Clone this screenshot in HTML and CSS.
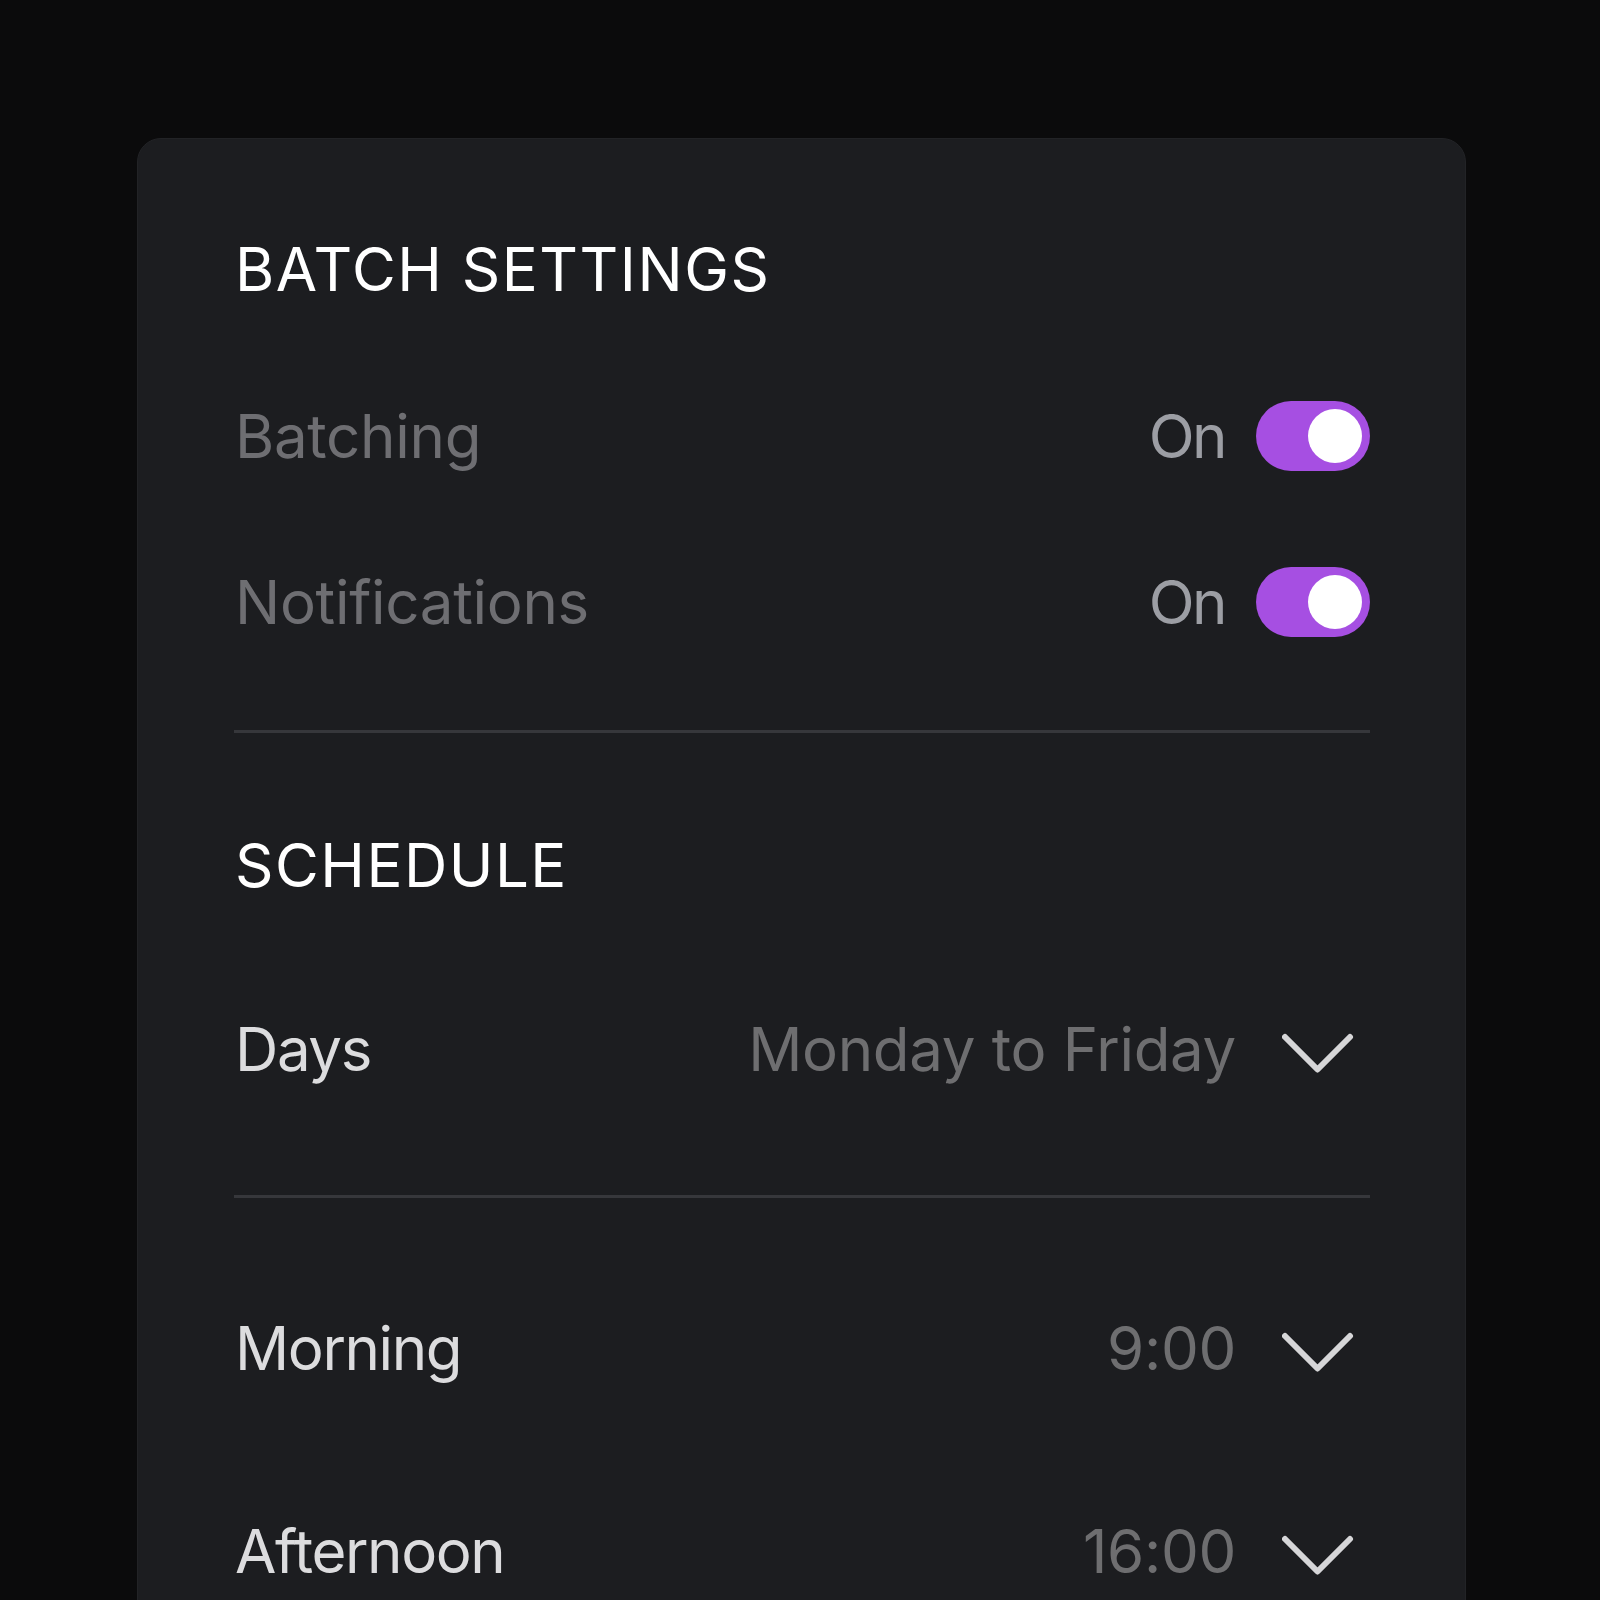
FILE: index.html
```html
<!DOCTYPE html>
<html>
<head>
<meta charset="utf-8">
<link rel="stylesheet" href="styles.css">
</head>
<body>
<div class="card">
  <div class="section-title">BATCH SETTINGS</div>
  <div class="row toggle-row">
    <span class="label muted">Batching</span>
    <div class="right">
      <span class="state">On</span>
      <span class="toggle"><span class="knob"></span></span>
    </div>
  </div>
  <div class="row toggle-row">
    <span class="label muted">Notifications</span>
    <div class="right">
      <span class="state">On</span>
      <span class="toggle"><span class="knob"></span></span>
    </div>
  </div>
  <div class="divider first"></div>
  <div class="section-title schedule">SCHEDULE</div>
  <div class="row days-row">
    <span class="label light">Days</span>
    <div class="right">
      <span class="value">Monday to Friday</span>
      <svg class="chevron" viewBox="0 0 88 48" width="88" height="48"><path d="M3 12 L35.5 44.5 L68 12" fill="none" stroke="#d6d6d8" stroke-width="6" stroke-linecap="round" stroke-linejoin="round"/></svg>
    </div>
  </div>
  <div class="divider second"></div>
  <div class="row time-row">
    <span class="label light">Morning</span>
    <div class="right">
      <span class="value">9:00</span>
      <svg class="chevron" viewBox="0 0 88 48" width="88" height="48"><path d="M3 12 L35.5 44.5 L68 12" fill="none" stroke="#d6d6d8" stroke-width="6" stroke-linecap="round" stroke-linejoin="round"/></svg>
    </div>
  </div>
  <div class="row time-row">
    <span class="label light">Afternoon</span>
    <div class="right">
      <span class="value">16:00</span>
      <svg class="chevron" viewBox="0 0 88 48" width="88" height="48"><path d="M3 12 L35.5 44.5 L68 12" fill="none" stroke="#d6d6d8" stroke-width="6" stroke-linecap="round" stroke-linejoin="round"/></svg>
    </div>
  </div>
</div>
</body>
</html>
```

FILE: styles.css
```css
html, body {
  margin: 0;
  padding: 0;
  background: #0b0b0c;
  height: 1600px;
  overflow: hidden;
}
body {
  font-family: Inter, "Noto Sans", sans-serif;
  padding-top: 138px;
}
.card {
  margin: 0 134px 0 137px;
  background: #1c1d20;
  border: 1px solid #222326;
  border-radius: 24px;
  padding: 90px 95px 0 97px;
  min-height: 1600px;
  box-sizing: border-box;
}
.section-title {
  height: 80px;
  display: flex;
  align-items: center;
  font-size: 60px;
  letter-spacing: 1.5px;
  color: #ffffff;
  font-weight: 400;
}
.row {
  display: flex;
  align-items: center;
  justify-content: space-between;
}
.toggle-row { height: 166px; }
.section-title + .toggle-row { margin-top: 44px; }
.label { font-size: 60px; line-height: 1; }
.muted { color: #6e6e72; letter-spacing: -0.3px; }
.light { color: #dcdcde; letter-spacing: -1.4px; }
.right {
  display: flex;
  align-items: center;
}
.state {
  font-size: 60px;
  line-height: 1;
  color: #9c9ea4;
  letter-spacing: -2.5px;
  margin-right: 31px;
}
.toggle {
  width: 114px;
  height: 70px;
  border-radius: 35px;
  background: #a64fe2;
  display: flex;
  align-items: center;
  justify-content: flex-end;
  padding-right: 8px;
  box-sizing: border-box;
}
.knob {
  width: 54px;
  height: 54px;
  border-radius: 50%;
  background: #ffffff;
}
.divider {
  height: 3px;
  background: #36373b;
  margin-left: -1px;
}
.divider.first { margin-top: 45px; }
.section-title.schedule { margin-top: 92px; }
.days-row { height: 166px; margin-top: 61px; }
.divider.second { margin-top: 63px; }
.time-row { height: 203px; }
.divider.second + .time-row { margin-top: 48px; }
.value {
  font-size: 60px;
  line-height: 1;
  color: #6e6e70;
  letter-spacing: -0.3px;
  margin-right: 46px;
}
.chevron { display: block; }
```
